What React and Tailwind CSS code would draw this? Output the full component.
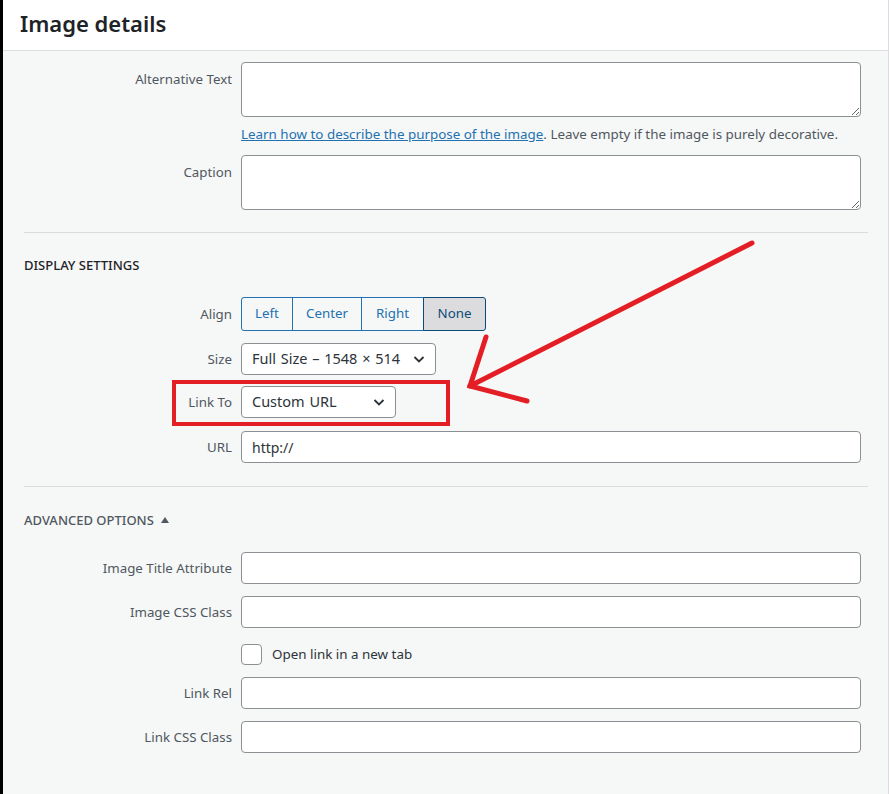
import { useState } from 'react';

const font = { fontFamily: '"Noto Sans", "Open Sans", Arial, sans-serif' };

const Chevron = () => (
  <svg width="20" height="20" viewBox="0 0 20 20" className="shrink-0">
    <path d="M5.5 8l4.5 4.5L14.5 8" fill="none" stroke="#2c3338" strokeWidth="1.8" />
  </svg>
);

const Row = ({ label, top = false, className = '', children }) => (
  <div className={`flex ${top ? 'items-start' : 'items-center'} mr-[7px] ${className}`}>
    <label className={`w-[208px] shrink-0 text-right text-[13.3px] leading-5 text-[#50575e] ${top ? 'pt-[7px]' : ''}`}>
      {label}
    </label>
    <div className="flex-1 ml-[9px]">{children}</div>
  </div>
);

const TextArea = () => (
  <textarea className="block w-full h-[55px] rounded-[4px] border border-[#8c8f94] bg-white px-2 py-1 text-[14px] outline-none" />
);

const TextInput = ({ value = '' }) => (
  <input
    defaultValue={value}
    className="block w-full h-[32px] rounded-[4px] border border-[#8c8f94] bg-white px-[10px] text-[14px] text-[#2c3338] outline-none"
    style={font}
  />
);

const Select = ({ value, width }) => (
  <div className={`flex items-center justify-between h-[32px] rounded-[4px] border border-[#8c8f94] bg-white pl-[10px] pr-[6px] text-[14.5px] text-[#2c3338] ${width}`}>
    <span className="whitespace-nowrap [word-spacing:1px]">{value}</span>
    <Chevron />
  </div>
);

const AlignGroup = () => {
  const [align, setAlign] = useState('None');
  const opts = [
    ['Left', 'w-[52px]'],
    ['Center', 'w-[70px]'],
    ['Right', 'w-[63px]'],
    ['None', 'w-[63px]'],
  ];
  return (
    <div className="flex h-[34px]">
      {opts.map(([name, w], i) => {
        const on = align === name;
        return (
          <button
            key={name}
            onClick={() => setAlign(name)}
            className={`${w} h-full text-[13.3px] border ${i > 0 ? '-ml-px' : ''} ${i === 0 ? 'rounded-l-[3px]' : ''} ${i === opts.length - 1 ? 'rounded-r-[3px]' : ''} ${
              on ? 'bg-[#dcdcde] border-[#0a4b78] text-[#0a4b78] z-10' : 'bg-[#f6f7f7] border-[#2271b1] text-[#2271b1]'
            }`}
          >
            {name}
          </button>
        );
      })}
    </div>
  );
};

const SectionTitle = ({ muted = false, children }) => (
  <h2 className={`flex items-center gap-[6px] text-[13px] font-medium uppercase leading-5 ${muted ? 'text-[#50575e]' : 'text-[#1d2327]'}`}>
    {children}
  </h2>
);

export default function App() {
  return (
    <div className="relative flex w-[889px] h-[794px] overflow-hidden bg-[#f6f7f7]" style={font}>
      <div className="w-[3px] shrink-0 bg-black" />
      <div className="flex-1 flex flex-col border-r border-[#dcdcde]">
        <header className="h-[51px] shrink-0 bg-white border-b border-[#dcdcde] pl-[17px] flex items-center">
          <h1 className="text-[22px] font-semibold text-[#1d2327] -mt-[4px]">Image details</h1>
        </header>

        <div className="pl-[21px] pr-[20px]">
          <Row label="Alternative Text" top className="mt-[11px]">
            <TextArea />
          </Row>
          <p className="ml-[217px] mt-[7px] text-[13.4px] leading-5 text-[#50575e]">
            <a href="#" className="text-[#2271b1] underline">Learn how to describe the purpose of the image</a>
            . Leave empty if the image is purely decorative.
          </p>
          <Row label="Caption" top className="mt-[11px]">
            <TextArea />
          </Row>

          <hr className="mt-[22px] border-0 border-t border-[#dcdcde]" />

          <div className="mt-[22px]">
            <SectionTitle>Display Settings</SectionTitle>
          </div>

          <Row label="Align" className="mt-[22px]">
            <AlignGroup />
          </Row>
          <Row label="Size" className="mt-[12px]">
            <Select value="Full Size – 1548 × 514" width="w-[195px]" />
          </Row>
          <div className="relative mt-[11px]">
            <Row label="Link To">
              <Select value="Custom URL" width="w-[155px]" />
            </Row>
            <div className="absolute left-[148px] -top-[6px] w-[278px] h-[46px] border-4 border-[#e31e24] pointer-events-none" />
          </div>
          <Row label="URL" className="mt-[13px]">
            <TextInput value="http://" />
          </Row>

          <hr className="mt-[23px] border-0 border-t border-[#dcdcde]" />

          <div className="mt-[23px]">
            <SectionTitle muted>
              Advanced Options
              <svg width="10" height="8" viewBox="0 0 10 8">
                <path d="M5 1l4 6H1z" fill="#50575e" />
              </svg>
            </SectionTitle>
          </div>

          <Row label="Image Title Attribute" className="mt-[22px]">
            <TextInput />
          </Row>
          <Row label="Image CSS Class" className="mt-[12px]">
            <TextInput />
          </Row>
          <div className="flex items-center ml-[217px] mt-[16px] gap-[10px]">
            <span className="block w-[21px] h-[21px] rounded-[4px] border border-[#8c8f94] bg-white" />
            <span className="text-[13.4px] text-[#2c3338]">Open link in a new tab</span>
          </div>
          <Row label="Link Rel" className="mt-[12px]">
            <TextInput />
          </Row>
          <Row label="Link CSS Class" className="mt-[12px]">
            <TextInput />
          </Row>
        </div>
      </div>

      {/* red callout arrow drawn on top of the form */}
      <svg className="absolute inset-0 pointer-events-none" width="889" height="794">
        <g stroke="#e31e24" strokeWidth="5" strokeLinecap="round" fill="none">
          <path d="M752 243L470 386" />
          <path d="M486 337L470 386L527 401" />
        </g>
      </svg>
    </div>
  );
}
